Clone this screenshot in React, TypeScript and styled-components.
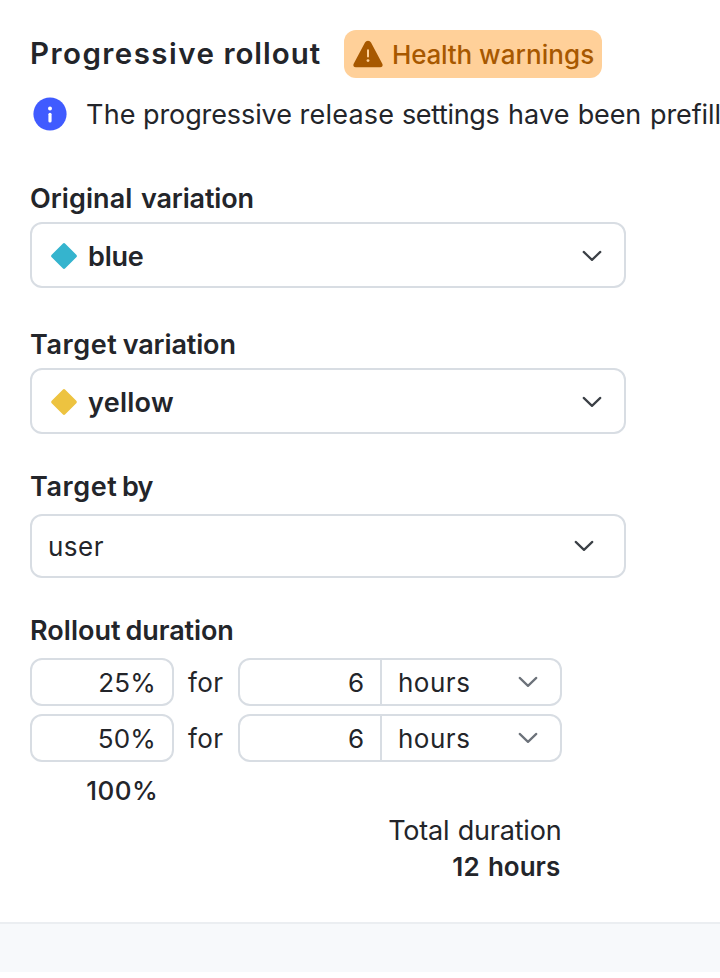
import React from "react";
import styled, { createGlobalStyle } from "styled-components";

const GlobalStyle = createGlobalStyle`
  * { box-sizing: border-box; }
  body {
    margin: 0;
    background: #fff;
    color: #23252a;
    font-family: Inter, "Liberation Sans", sans-serif;
    font-size: 26px;
    line-height: 32px;
    overflow: hidden;
  }
`;

const Page = styled.main`
  width: 720px;
  height: 978px;
  overflow: hidden;
  display: flex;
  flex-direction: column;
`;

const Content = styled.section`
  height: 922px;
  padding: 30px 0 0 30px;
`;

const Header = styled.header`
  display: flex;
  align-items: center;
  height: 48px;
`;

const Text = styled.span<{ $track?: number; $weight?: number; $size?: number }>`
  display: block;
  padding-top: 2px;
  white-space: nowrap;
  font-size: ${(p) => p.$size ?? 26}px;
  font-weight: ${(p) => p.$weight ?? 400};
  letter-spacing: ${(p) => p.$track ?? 0}px;
`;

const Word = styled.span<{ $track: number; $width?: number }>`
  display: inline-block;
  width: ${(p) => (p.$width ? `${p.$width}px` : "auto")};
  letter-spacing: ${(p) => p.$track}px;
  text-align: left;
`;

const Title = styled.h1`
  margin: 0;
  padding-bottom: 3px;
  width: 314px;
  font-size: 29.5px;
  font-weight: 600;
  white-space: nowrap;
`;

const Badge = styled.div`
  display: flex;
  align-items: center;
  gap: 8px;
  width: 258px;
  height: 48px;
  padding-left: 8px;
  border-radius: 12px;
  background: #ffd099;
  color: #a75800;
`;

const Notice = styled.div`
  display: flex;
  align-items: center;
  gap: 19px;
  height: 36px;
  margin-top: 18px;
  padding-left: 3px;
  svg { flex: none; }
`;

const Field = styled.div<{ $top: number; $gap: number }>`
  margin-top: ${(p) => p.$top}px;
  display: flex;
  flex-direction: column;
  gap: ${(p) => p.$gap}px;
`;

const Label = styled.div`
  height: 32px;
  padding-top: 1px;
  font-size: 27px;
  font-weight: 600;
  white-space: nowrap;
`;

const Select = styled.div<{ $height: number; $left: number; $right: number; $top?: number }>`
  display: flex;
  align-items: center;
  width: 596px;
  height: ${(p) => p.$height}px;
  padding: ${(p) => p.$top ?? 0}px ${(p) => p.$right}px 0 ${(p) => p.$left}px;
  border: 2px solid #d8dde3;
  border-radius: 12px;
  > svg:last-child { margin-left: auto; }
`;

const Diamond = styled.svg`
  margin-right: 10px;
`;

const Stages = styled.div`
  display: flex;
  flex-direction: column;
  gap: 8px;
`;

const Stage = styled.div`
  display: grid;
  grid-template-columns: 144px 64px 324px;
  height: 48px;
  align-items: center;
`;

const Percent = styled.div`
  height: 48px;
  padding: 5px 16px 0 0;
  border: 2px solid #d8dde3;
  border-radius: 12px;
  text-align: right;
`;

const Between = styled.div`
  padding-left: 14px;
`;

const Duration = styled.div`
  display: grid;
  grid-template-columns: 142px 1fr;
  height: 48px;
  border: 2px solid #d8dde3;
  border-radius: 12px;
`;

const Amount = styled.div`
  padding: 5px 16px 0 0;
  border-right: 2px solid #d8dde3;
  text-align: right;
`;

const Unit = styled.div`
  display: flex;
  align-items: center;
  justify-content: space-between;
  padding: 0 22px 0 16px;
`;

const Final = styled.div`
  width: 128.4px;
  margin-top: 11px;
  text-align: right;
`;

const Total = styled.div`
  width: 531.4px;
  height: 78px;
  margin-top: 6px;
  display: flex;
  flex-direction: column;
  align-items: flex-end;
  gap: 2px;
`;

const TotalValue = styled.div`
  padding: 2px 1.2px 0 0;
  font-weight: 600;
`;

const Footer = styled.footer`
  height: 50px;
  border-top: 2px solid #ebeef1;
  background: #f7f9fb;
`;

const Chevron = ({ color = "#3b4046" }: { color?: string }) => (
  <svg width="20" height="12" viewBox="0 0 20 12" fill="none" stroke={color} strokeWidth="2.2" strokeLinecap="round" strokeLinejoin="round">
    <path d="M1.7 1.9 10 9.9l8.3-8" />
  </svg>
);

const Gem = ({ color }: { color: string }) => (
  <Diamond width="28" height="28" viewBox="0 0 28 28">
    <rect x="4.4" y="4.4" width="19.2" height="19.2" rx="1.8" transform="rotate(45 14 14)" fill={color} />
  </Diamond>
);

const Warning = () => (
  <svg width="32" height="32" viewBox="0 0 32 32">
    <path d="M13 4.6a3.4 3.4 0 0 1 6 0l11.3 21.1c1 1.7-.1 3.5-2.1 3.5H3.8c-2 0-3.1-1.8-2.1-3.5Z" fill="#a75800" />
    <path d="M16 12.2v6.3" stroke="#ffd099" strokeWidth="2" strokeLinecap="round" />
    <circle cx="16" cy="22.6" r="1.4" fill="#ffd099" />
  </svg>
);

const Info = () => (
  <svg width="34" height="34" viewBox="0 0 34 34">
    <circle cx="17" cy="17" r="16.6" fill="#405bff" />
    <circle cx="17" cy="11.4" r="2" fill="#fff" />
    <path d="M17 17.3v6.7" stroke="#fff" strokeWidth="3.2" strokeLinecap="round" />
  </svg>
);

type Part = { text: string; track: number; width?: number };

const Words = ({ parts }: { parts: Part[] }) => (
  <>
    {parts.map(({ text, track, width }) => (
      <Word key={text} $track={track} $width={width}>
        {text}
      </Word>
    ))}
  </>
);

const title: Part[] = [
  { text: "Progressive", track: 1.45, width: 193.4 },
  { text: "rollout", track: 0.97 },
];
const warning: Part[] = [
  { text: "Health", track: -0.2, width: 87 },
  { text: "warnings", track: 0.1 },
];
const notice: Part[] = [
  { text: "The", track: 0.23, width: 57 },
  { text: "progressive", track: -0.1, width: 156.6 },
  { text: "release", track: 0.2, width: 102.3 },
  { text: "settings", track: -0.35, width: 106 },
  { text: "have", track: 0.19, width: 69.8 },
  { text: "been", track: -0.15, width: 72.3 },
  { text: "prefill", track: -0.1 },
];
const original: Part[] = [
  { text: "Original", track: 0.07, width: 111 },
  { text: "variation", track: -0.15 },
];
const target: Part[] = [
  { text: "Target", track: 0.59, width: 92.7 },
  { text: "variation", track: -0.12 },
];
const targetBy: Part[] = [
  { text: "Target", track: 0.59, width: 92 },
  { text: "by", track: -0.8 },
];
const rollout: Part[] = [
  { text: "Rollout", track: 0.05, width: 95.6 },
  { text: "duration", track: -0.1 },
];
const total: Part[] = [
  { text: "Total", track: -0.2, width: 69.7 },
  { text: "duration", track: -0.22 },
];
const totalValue: Part[] = [
  { text: "12", track: 0.2, width: 35.7 },
  { text: "hours", track: 0 },
];

const stages = ["25%", "50%"];

export default function App() {
  return (
    <>
      <GlobalStyle />
      <Page>
        <Content>
          <Header>
            <Title><Words parts={title} /></Title>
            <Badge>
              <Warning />
              <Text $weight={500}><Words parts={warning} /></Text>
            </Badge>
          </Header>
          <Notice>
            <Info />
            <Text $size={27}><Words parts={notice} /></Text>
          </Notice>
          <Field $top={50} $gap={8}>
            <Label><Words parts={original} /></Label>
            <Select $height={66} $left={18} $right={22} $top={2}>
              <Gem color="#35b4ce" />
              <Text $weight={600} $size={27} $track={-0.2}>blue</Text>
              <Chevron />
            </Select>
          </Field>
          <Field $top={40} $gap={8}>
            <Label><Words parts={target} /></Label>
            <Select $height={66} $left={18} $right={22} $top={2}>
              <Gem color="#edc340" />
              <Text $weight={600} $size={27} $track={0.28}>yellow</Text>
              <Chevron />
            </Select>
          </Field>
          <Field $top={36} $gap={12}>
            <Label><Words parts={targetBy} /></Label>
            <Select $height={64} $left={16} $right={30}>
              <Text $track={0.5}>user</Text>
              <Chevron />
            </Select>
          </Field>
          <Field $top={36} $gap={12}>
            <Label><Words parts={rollout} /></Label>
            <Stages>
              {stages.map((value) => (
                <Stage key={value}>
                  <Percent><Text $track={0.2}>{value}</Text></Percent>
                  <Between><Text $track={0.4}>for</Text></Between>
                  <Duration>
                    <Amount><Text>6</Text></Amount>
                    <Unit><Text $track={0.5}>hours</Text><Chevron color="#6c727a" /></Unit>
                  </Duration>
                </Stage>
              ))}
            </Stages>
          </Field>
          <Final><Text $weight={500} $track={0.5}>100%</Text></Final>
          <Total>
            <Text $size={27}><Words parts={total} /></Text>
            <TotalValue><Words parts={totalValue} /></TotalValue>
          </Total>
        </Content>
        <Footer />
      </Page>
    </>
  );
}
